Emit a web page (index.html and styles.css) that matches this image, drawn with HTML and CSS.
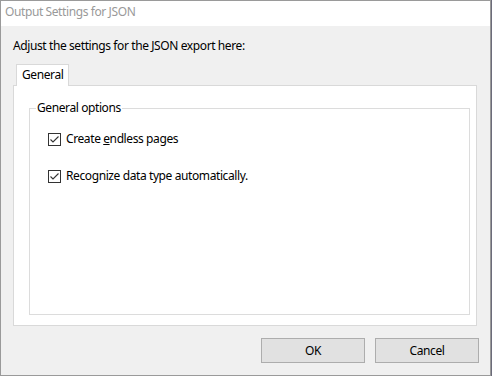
FILE: index.html
```html
<!DOCTYPE html>
<html>
<head>
<meta charset="utf-8">
<link rel="stylesheet" href="styles.css">
</head>
<body>
<div class="window">
  <div class="titlebar">Output Settings for JSON</div>
  <div class="content">
    <div class="intro">Adjust the settings for the JSON export here:</div>
    <div class="tabs"><div class="tab">General</div></div>
    <div class="panel">
      <fieldset class="group">
        <legend>General options</legend>
        <label class="check">
          <span class="box"><svg width="11" height="11" viewBox="0 0 11 11"><path d="M1.5 5.5 L4 8 L9.5 2.5" fill="none" stroke="#333" stroke-width="1.1"/></svg></span>
          <span class="lbl">Create <u>e</u>ndless pages</span>
        </label>
        <label class="check">
          <span class="box"><svg width="11" height="11" viewBox="0 0 11 11"><path d="M1.5 5.5 L4 8 L9.5 2.5" fill="none" stroke="#333" stroke-width="1.1"/></svg></span>
          <span class="lbl">Recognize data type automatically.</span>
        </label>
      </fieldset>
    </div>
    <div class="buttons">
      <button class="btn">OK</button>
      <button class="btn">Cancel</button>
    </div>
  </div>
</div>
</body>
</html>
```
FILE: styles.css
```css
html, body {
  margin: 0;
  padding: 0;
  background: #6b6b7a;
}
body {
  width: 492px;
  height: 376px;
  overflow: hidden;
  font-family: "Noto Sans", "DejaVu Sans", sans-serif;
  font-size: 12px;
  letter-spacing: -0.4px;
  color: #000;
}
.window {
  width: 491px;
  height: 376px;
  box-sizing: border-box;
  border: 1px solid #9a9a9a;
  background: #f0f0f0;
  display: flex;
  flex-direction: column;
}
.titlebar {
  height: 25px;
  flex: none;
  box-sizing: border-box;
  background: #fff;
  color: #999;
  padding-left: 4px;
  line-height: 21px;
}
.content {
  flex: 1;
  padding: 0 13px 0 12px;
  display: flex;
  flex-direction: column;
}
.intro {
  height: 38px;
  box-sizing: border-box;
  padding-top: 11px;
  line-height: 17px;
}
.tabs {
  display: flex;
  padding-left: 3px;
}
.tab {
  width: 53px;
  height: 22px;
  box-sizing: border-box;
  border: 1px solid #d9d9d9;
  border-bottom: none;
  background: #fff;
  margin-bottom: -1px;
  position: relative;
  z-index: 1;
  padding-left: 5px;
  line-height: 20px;
}
.panel {
  height: 241px;
  box-sizing: border-box;
  border: 1px solid #d9d9d9;
  background: #fff;
  padding: 14px 6px 10px 15px;
  display: flex;
}
.group {
  flex: 1;
  margin: 0;
  border: 1px solid #dcdcdc;
  padding: 15px 0 0 0;
  display: flex;
  flex-direction: column;
  gap: 20px;
  min-width: 0;
}
.group legend {
  margin-left: 6px;
  padding: 0 1px;
  line-height: 16px;
}
.check {
  display: flex;
  align-items: center;
  gap: 5px;
  height: 17px;
  padding-left: 18px;
}
.lbl {
  margin-top: -2px;
}
.box {
  width: 13px;
  height: 13px;
  box-sizing: border-box;
  border: 1px solid #333;
  background: #fff;
  display: flex;
  align-items: center;
  justify-content: center;
}
.box svg {
  display: block;
}
.buttons {
  margin-top: 12px;
  margin-right: -2px;
  display: flex;
  justify-content: flex-end;
  gap: 10px;
}
.btn {
  width: 104px;
  height: 25px;
  box-sizing: border-box;
  border: 1px solid #adadad;
  background: #e1e1e1;
  font: inherit;
  letter-spacing: inherit;
  color: #000;
  padding: 0;
}
```
